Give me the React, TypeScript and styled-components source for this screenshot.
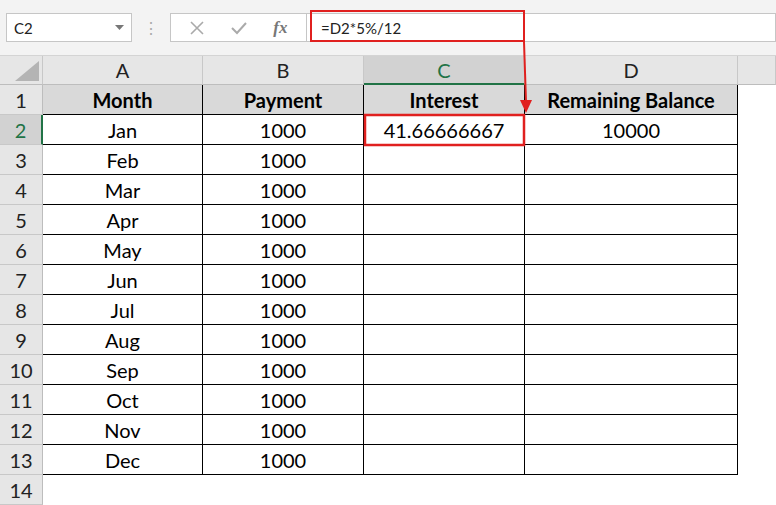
import React from "react";
import styled, { createGlobalStyle } from "styled-components";

const Global = createGlobalStyle`
  body { margin: 0; font-family: Lato, "Open Sans", sans-serif; background: #fff; }
`;

const Page = styled.div`position: relative; width: 776px; height: 505px; overflow: hidden;`;
const Toolbar = styled.div`
  height: 56px; background: #f3f3f3; display: flex; align-items: center; gap: 0;
  padding: 0 0 0 6px; box-sizing: border-box; border-bottom: 1px solid #d4d4d4;
`;
const NameBox = styled.div`
  width: 126px; height: 29px; background: #fff; border: 1px solid #c6c6c6; box-sizing: border-box;
  display: flex; align-items: center; justify-content: space-between; padding: 0 7px 0 7px;
  font-size: 15px; color: #222;
`;
const Dots = styled.div`width: 38px; display: flex; justify-content: center; color: #aaa; font-size: 16px;`;
const IconBox = styled.div`
  width: 136px; height: 29px; background: #fff; border: 1px solid #c6c6c6; box-sizing: border-box; border-right: none;
  display: flex; align-items: center; justify-content: space-around; padding: 0 6px;
`;
const Fx = styled.span`font-family: "Liberation Serif", serif; font-style: italic; font-weight: bold; color: #777; font-size: 17px;`;
const Formula = styled.div`
  flex: 1; height: 29px; background: #fff; border: 1px solid #c6c6c6; box-sizing: border-box;
  display: flex; align-items: center; padding-left: 14px; font-size: 15px; color: #222;
`;

const Grid = styled.div`
  display: grid; grid-template-columns: 43px 160px 161px 161px 213px 38px;
  grid-auto-rows: 30px;
  grid-template-rows: 29px;
`;
const Corner = styled.div`background: #e6e6e6; border-right: 1px solid #c8c8c8; border-bottom: 1px solid #bdbdbd; position: relative;`;
const ColHead = styled.div<{ $sel?: boolean }>`
  background: ${p => (p.$sel ? "#d2d2d2" : "#e6e6e6")}; color: ${p => (p.$sel ? "#217346" : "#222")};
  border-right: 1px solid #c8c8c8; border-bottom: ${p => (p.$sel ? "2px solid #217346" : "1px solid #bdbdbd")};
  display: flex; align-items: center; justify-content: center; font-size: 20px; box-sizing: border-box;
`;
const RowHead = styled.div<{ $sel?: boolean }>`
  background: ${p => (p.$sel ? "#d2d2d2" : "#e6e6e6")}; color: ${p => (p.$sel ? "#217346" : "#222")};
  border-bottom: 1px solid #c8c8c8; border-right: ${p => (p.$sel ? "2px solid #217346" : "1px solid #bdbdbd")};
  display: flex; align-items: center; justify-content: center; font-size: 20px; box-sizing: border-box;
`;
const Cell = styled.div<{ $head?: boolean; $inTable?: boolean }>`
  background: ${p => (p.$head ? "#d9d9d9" : "#fff")};
  font-weight: ${p => (p.$head ? 700 : 400)};
  border-right: 1px solid ${p => (p.$inTable ? "#000" : "transparent")};
  border-bottom: 1px solid ${p => (p.$inTable ? "#000" : "transparent")};
  display: flex; align-items: center; justify-content: center; font-size: 20px; color: #000; box-sizing: border-box;
`;
const Blank = styled.div``;

const Overlay = styled.svg`position: absolute; left: 0; top: 0; pointer-events: none;`;

const months = ["Jan","Feb","Mar","Apr","May","Jun","Jul","Aug","Sep","Oct","Nov","Dec"];

export default function App() {
  return (
    <Page>
      <Global />
      <Toolbar>
        <NameBox>C2<svg width="9" height="6"><path d="M0 0h9L4.5 5z" fill="#777" /></svg></NameBox>
        <Dots>⋮</Dots>
        <IconBox>
          <svg width="16" height="16"><path d="M2 2l12 12M14 2L2 14" stroke="#aaa" strokeWidth="1.6" /></svg>
          <svg width="18" height="16"><path d="M2 8l5 5L16 3" stroke="#aaa" strokeWidth="2" fill="none" /></svg>
          <Fx>fx</Fx>
        </IconBox>
        <Formula>=D2*5%/12</Formula>
      </Toolbar>
      <Grid>
        <Corner><svg width="24" height="20" style={{ position: "absolute", right: 3, bottom: 3 }}><path d="M24 0V20H0z" fill="#b4b4b4" /></svg></Corner>
        {["A", "B", "C", "D"].map(c => <ColHead key={c} $sel={c === "C"}>{c}</ColHead>)}
        <ColHead />
        {Array.from({ length: 14 }, (_, i) => {
          const r = i + 1;
          const inT = r <= 13;
          const vals = r === 1 ? ["Month", "Payment", "Interest", "Remaining Balance"]
            : r <= 13 ? [months[r - 2], "1000", r === 2 ? "41.66666667" : "", r === 2 ? "10000" : ""] : ["", "", "", ""];
          return (
            <React.Fragment key={r}>
              <RowHead $sel={r === 2}>{r}</RowHead>
              {vals.map((v, j) => <Cell key={j} $head={r === 1} $inTable={inT}>{v}</Cell>)}
              <Blank />
            </React.Fragment>
          );
        })}
      </Grid>
      <Overlay width="776" height="505">
        <rect x="311" y="11" width="213" height="30" fill="none" stroke="#e0201f" strokeWidth="2" />
        <rect x="365" y="115" width="159" height="30" fill="none" stroke="#e0201f" strokeWidth="2.5" />
        <path d="M524 42 L526 102" stroke="#e0201f" strokeWidth="2" />
        <path d="M520 100 L532 100 L526 113 Z" fill="#e0201f" />
      </Overlay>
    </Page>
  );
}
